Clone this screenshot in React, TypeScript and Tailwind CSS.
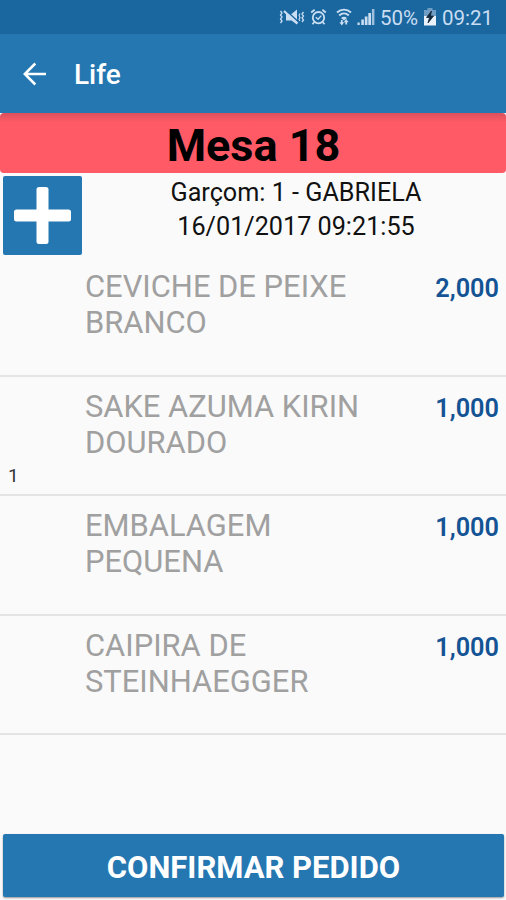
interface OrderItem {
  lines: string[];
  quantity: string;
  note?: string;
}

const items: OrderItem[] = [
  { lines: ["CEVICHE DE PEIXE", "BRANCO"], quantity: "2,000" },
  { lines: ["SAKE AZUMA KIRIN", "DOURADO"], quantity: "1,000", note: "1" },
  { lines: ["EMBALAGEM", "PEQUENA"], quantity: "1,000" },
  { lines: ["CAIPIRA DE", "STEINHAEGGER"], quantity: "1,000" },
];

function VibrateMuteIcon() {
  return (
    <svg width="26" height="18" viewBox="0 0 26 18" fill="none" stroke="currentColor">
      <path d="M1.5 3l1.5 2-1.5 2L3 9l-1.5 2L3 13l-1.5 2M24.5 4L23 6l1.5 2L23 10l1.5 2-1.5 2" strokeWidth="1.3" />
      <path d="M21 5.5L20 7.5l1 2-1 2 1 1.5" strokeWidth="1.1" />
      <path d="M7 6h5.5L18 1.5v15l-5.5-4H7z" fill="currentColor" stroke="none" />
      <path d="M7 2.5l12.5 11.5" stroke="#1a669f" strokeWidth="1.6" />
      <path d="M5 3l13.5 12.5" strokeWidth="2.2" />
    </svg>
  );
}

function AlarmIcon() {
  return (
    <svg width="17" height="18" viewBox="0 0 17 18" fill="none" stroke="currentColor" strokeWidth="1.8">
      <circle cx="8.5" cy="9.7" r="5.7" />
      <path d="M1.2 4.5l3.4-2.8M15.8 4.5l-3.4-2.8M4.3 14l-1.8 2.2M12.7 14l1.8 2.2" />
      <path d="M5.8 9.2l2.3 2 3.2-3.6" strokeWidth="1.4" />
    </svg>
  );
}

function WifiIcon() {
  return (
    <svg width="16" height="19" viewBox="0 0 16 19" fill="none" stroke="currentColor">
      <path d="M1 4.5c4-3.8 10-3.8 14 0M3.2 7.5c2.8-2.6 6.8-2.6 9.6 0" strokeWidth="1.9" />
      <path d="M5 10c1.8-1.7 4.2-1.7 6 0l-3 2.6z" fill="currentColor" stroke="none" />
      <path d="M5.8 12v3.5M10.2 13v3.5" strokeWidth="1.7" />
      <path d="M3.4 14.3h4.8L5.8 17.6zM7.8 14.2h4.8l-2.4-3.2z" fill="currentColor" stroke="none" />
    </svg>
  );
}

function SignalIcon() {
  return (
    <svg width="18" height="18" viewBox="0 0 18 18" fill="currentColor">
      <path d="M.5 14.5h2.2V17H.5zM4.3 11.5h2.6V17H4.3zM7.8 8.5h2.7V17H7.8zM11.3 5H14v12h-2.7z" />
      <path d="M14.9 1h2.5v16h-2.5z" opacity=".75" />
    </svg>
  );
}

function BatteryIcon() {
  return (
    <svg width="12" height="18" viewBox="0 0 12 18">
      <path d="M3.5 0h5v2H12v6H0V2h3.5z" fill="#6f9dc4" />
      <path d="M0 8h12v9.5H0z" fill="#e9f1fa" />
      <path d="M7.5 3L2.5 9.5h3L4 15l5.5-7H6.4z" fill="#10263b" stroke="#10263b" strokeWidth=".8" />
    </svg>
  );
}

function StatusBar() {
  return (
    <div className="flex h-[34px] shrink-0 items-center bg-[#1a669f] pl-[279px] text-[20.5px] text-[#c9def2]">
      <VibrateMuteIcon />
      <div className="ml-[5px]"><AlarmIcon /></div>
      <div className="ml-[9px]"><WifiIcon /></div>
      <div className="ml-[5px]"><SignalIcon /></div>
      <span className="ml-[5px] w-[39px] pt-[2px] whitespace-nowrap">50%</span>
      <div className="ml-[5px]"><BatteryIcon /></div>
      <span className="ml-[6px] pt-[2px] whitespace-nowrap">09:21</span>
    </div>
  );
}

function ItemRow({ item }: { item: OrderItem }) {
  return (
    <li className="flex h-[119.5px] border-b-2 border-[#e4e4e4] pt-[12px] pr-[7px]">
      <div className="flex w-[85px] items-end pb-[6px] pl-[8px] text-[19px] leading-[24px] text-[#333]">
        {item.note}
      </div>
      <div className="flex-1 text-[30.9px] leading-[36px] text-[#a0a0a0]">
        {item.lines.map((line) => (
          <p key={line} className="whitespace-nowrap">{line}</p>
        ))}
      </div>
      <span className="pt-[5px] text-[25.3px] leading-[30px] font-semibold text-[#145394]">
        {item.quantity}
      </span>
    </li>
  );
}

export default function App() {
  return (
    <div className="flex h-[900px] w-[506px] flex-col overflow-hidden bg-[#fafafa] font-['Roboto',sans-serif]">
      <StatusBar />

      {/* App bar */}
      <header className="flex h-[79px] shrink-0 items-center bg-[#2577b2] pl-[23px] text-white">
        <svg width="24" height="24" viewBox="0 0 24 24" fill="none" stroke="currentColor" strokeWidth="2.5">
          <path d="M23 12H2M12.3 1.5L1.8 12l10.5 10.5" />
        </svg>
        <h1 className="ml-[27px] pt-[3px] text-[28px] font-medium">Life</h1>
      </header>

      {/* Table banner */}
      <div className="flex h-[60px] shrink-0 items-center justify-center rounded-[4px] bg-[#ff5a66] bg-linear-to-b from-[#d9505c] to-[#ff5a66] to-15% pt-[6px] pl-px text-[45px] font-bold text-black">
        Mesa 18
      </div>

      <div className="flex h-[84px] shrink-0 pt-[3px] pl-[3px]">
        <button className="flex size-[79px] items-center justify-center rounded-[2px] bg-[#2577b2]">
          <svg width="57" height="57" viewBox="0 0 57 57" fill="#fff">
            <rect x="22.5" width="12" height="57" rx="2.5" />
            <rect y="22.5" width="57" height="12" rx="2.5" />
          </svg>
        </button>
        <div className="flex-1 pl-[4px] text-center text-[25.2px] leading-[34px] text-[#111]">
          <p>Garçom: 1 - GABRIELA</p>
          <p>16/01/2017 09:21:55</p>
        </div>
      </div>

      <ul className="flex-1">
        {items.map((item) => (
          <ItemRow key={item.lines[0]} item={item} />
        ))}
      </ul>

      <div className="pr-[2px] pb-[3px] pl-[3px]">
        <button className="h-[63px] w-full rounded-[2px] bg-[#2577b2] pt-[5px] text-[31px] font-bold text-white shadow-[0_1px_2px_rgba(0,0,0,0.4)]">
          CONFIRMAR PEDIDO
        </button>
      </div>
    </div>
  );
}
